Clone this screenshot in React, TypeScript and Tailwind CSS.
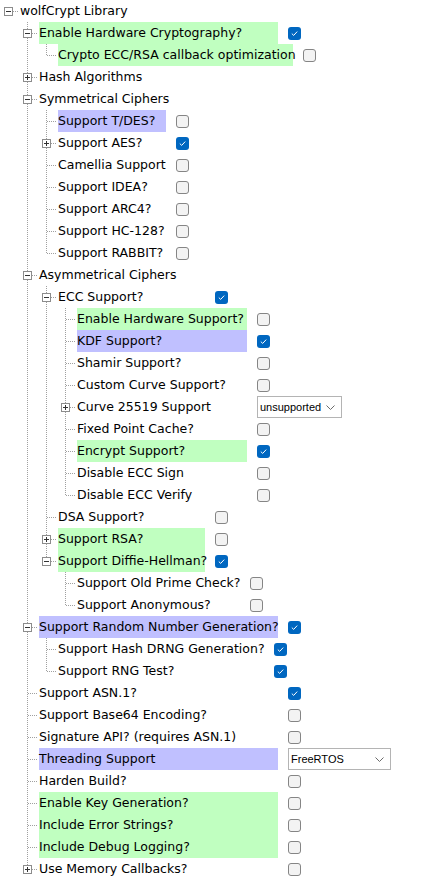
import React from "react";

type Ctrl = "on" | "off" | { select: string; w: number };
type Node = {
  label: string;
  hl?: "g" | "p";
  ctrl?: Ctrl;
  children?: Node[];
  collapsed?: boolean;
  childW?: number;
};

const tree: Node = {
  label: "wolfCrypt Library",
  childW: 239,
  children: [
    {
      label: "Enable Hardware Cryptography?",
      hl: "g",
      ctrl: "on",
      childW: 235,
      children: [{ label: "Crypto ECC/RSA callback optimization", hl: "g", ctrl: "off" }],
    },
    { label: "Hash Algorithms", collapsed: true },
    {
      label: "Symmetrical Ciphers",
      childW: 108,
      children: [
        { label: "Support T/DES?", hl: "p", ctrl: "off" },
        { label: "Support AES?", ctrl: "on", collapsed: true },
        { label: "Camellia Support", ctrl: "off" },
        { label: "Support IDEA?", ctrl: "off" },
        { label: "Support ARC4?", ctrl: "off" },
        { label: "Support HC-128?", ctrl: "off" },
        { label: "Support RABBIT?", ctrl: "off" },
      ],
    },
    {
      label: "Asymmetrical Ciphers",
      childW: 147,
      children: [
        {
          label: "ECC Support?",
          ctrl: "on",
          childW: 170,
          children: [
            { label: "Enable Hardware Support?", hl: "g", ctrl: "off" },
            { label: "KDF Support?", hl: "p", ctrl: "on" },
            { label: "Shamir Support?", ctrl: "off" },
            { label: "Custom Curve Support?", ctrl: "off" },
            { label: "Curve 25519 Support", collapsed: true, ctrl: { select: "unsupported", w: 85 } },
            { label: "Fixed Point Cache?", ctrl: "off" },
            { label: "Encrypt Support?", hl: "g", ctrl: "on" },
            { label: "Disable ECC Sign", ctrl: "off" },
            { label: "Disable ECC Verify", ctrl: "off" },
          ],
        },
        { label: "DSA Support?", ctrl: "off" },
        { label: "Support RSA?", hl: "g", ctrl: "off", collapsed: true },
        {
          label: "Support Diffie-Hellman?",
          hl: "g",
          ctrl: "on",
          childW: 163,
          children: [
            { label: "Support Old Prime Check?", ctrl: "off" },
            { label: "Support Anonymous?", ctrl: "off" },
          ],
        },
      ],
    },
    {
      label: "Support Random Number Generation?",
      hl: "p",
      ctrl: "on",
      childW: 206,
      children: [
        { label: "Support Hash DRNG Generation?", ctrl: "on" },
        { label: "Support RNG Test?", ctrl: "on" },
      ],
    },
    { label: "Support ASN.1?", ctrl: "on" },
    { label: "Support Base64 Encoding?", ctrl: "off" },
    { label: "Signature API? (requires ASN.1)", ctrl: "off" },
    { label: "Threading Support", hl: "p", ctrl: { select: "FreeRTOS", w: 103 } },
    { label: "Harden Build?", ctrl: "off" },
    { label: "Enable Key Generation?", hl: "g", ctrl: "off" },
    { label: "Include Error Strings?", hl: "g", ctrl: "off" },
    { label: "Include Debug Logging?", hl: "g", ctrl: "off" },
    { label: "Use Memory Callbacks?", ctrl: "off", collapsed: true },
  ],
};

type Row = {
  node: Node;
  level: number;
  isLast: boolean;
  cont: number[];
  width?: number;
};

function flatten(node: Node, level: number, isLast: boolean, cont: number[], width: number | undefined, out: Row[]) {
  out.push({ node, level, isLast, cont, width });
  if (node.children && !node.collapsed) {
    const nextCont = level > 0 && !isLast ? [...cont, level] : cont;
    node.children.forEach((c, i) =>
      flatten(c, level + 1, i === node.children!.length - 1, nextCont, node.childW, out)
    );
  }
}

const rows: Row[] = [];
flatten(tree, 0, true, [], undefined, rows);

const DOT = "#a0a0a0";

function Gutter({ row }: { row: Row }) {
  const { level, isLast, cont, node } = row;
  const textX = 20 + 19 * level;
  const cx = 8 + 19 * level;
  const hasKids = !!node.children || !!node.collapsed;
  return (
    <svg width={textX} height={22} className="shrink-0" shapeRendering="crispEdges">
      {cont.map((k) => (
        <line key={k} x1={8 + 19 * k + 0.5} x2={8 + 19 * k + 0.5} y1={0} y2={22} stroke={DOT} strokeDasharray="1 1" />
      ))}
      {level > 0 && (
        <line x1={cx + 0.5} x2={cx + 0.5} y1={0} y2={isLast ? 12 : 22} stroke={DOT} strokeDasharray="1 1" />
      )}
      <line x1={cx + 1} x2={textX - 1} y1={11.5} y2={11.5} stroke={DOT} strokeDasharray="1 1" />
      {hasKids && (
        <g>
          <rect x={cx - 3.5} y={7.5} width={8} height={8} fill="#ffffff" stroke="#8c8c8c" />
          <line x1={cx - 2} x2={cx + 3} y1={11.5} y2={11.5} stroke="#333333" />
          {node.collapsed && <line x1={cx + 0.5} x2={cx + 0.5} y1={9} y2={14} stroke="#333333" />}
        </g>
      )}
    </svg>
  );
}

function Checkbox({ on }: { on: boolean }) {
  if (on)
    return (
      <div className="w-[13px] h-[13px] rounded-[3px] bg-[#0067c0] flex items-center justify-center">
        <svg width="9" height="9" viewBox="0 0 9 9">
          <path d="M1.8 4.6 L3.7 6.4 L7.2 2.6" fill="none" stroke="#ffffff" strokeWidth="1" />
        </svg>
      </div>
    );
  return <div className="w-[13px] h-[13px] rounded-[3px] bg-[#f3f3f3] border border-[#858585]" />;
}

function Select({ value, w }: { value: string; w: number }) {
  return (
    <div
      className="h-[22px] border border-[#b4b4b4] bg-white flex items-center justify-between pl-[2px] pr-[6px] text-[11px] text-black"
      style={{ width: w, fontFamily: '"Liberation Sans", Arial, sans-serif' }}
    >
      <span>{value}</span>
      <svg width="9" height="5" viewBox="0 0 9 5">
        <path d="M0.5 0.5 L4.5 4.5 L8.5 0.5" fill="none" stroke="#6b6b6b" strokeWidth="1" />
      </svg>
    </div>
  );
}

export default function App() {
  return (
    <div
      className="w-[426px] h-[885px] bg-white text-black text-[12.5px] overflow-hidden"
      style={{ fontFamily: '"DejaVu Sans", Verdana, sans-serif' }}
    >
      {rows.map((r, i) => {
        const hl = r.node.hl === "g" ? "bg-[#c0ffc0]" : r.node.hl === "p" ? "bg-[#c0c0ff]" : "";
        const c = r.node.ctrl;
        return (
          <div key={i} className="flex h-[22px] items-center">
            <Gutter row={r} />
            <div
              className={`h-[22px] leading-[22px] whitespace-nowrap shrink-0 ${hl}`}
              style={r.width ? { width: r.width } : undefined}
            >
              {r.node.label}
            </div>
            {c && (
              <div className="ml-[10px] flex items-center">
                {c === "on" || c === "off" ? <Checkbox on={c === "on"} /> : <Select value={c.select} w={c.w} />}
              </div>
            )}
          </div>
        );
      })}
    </div>
  );
}
